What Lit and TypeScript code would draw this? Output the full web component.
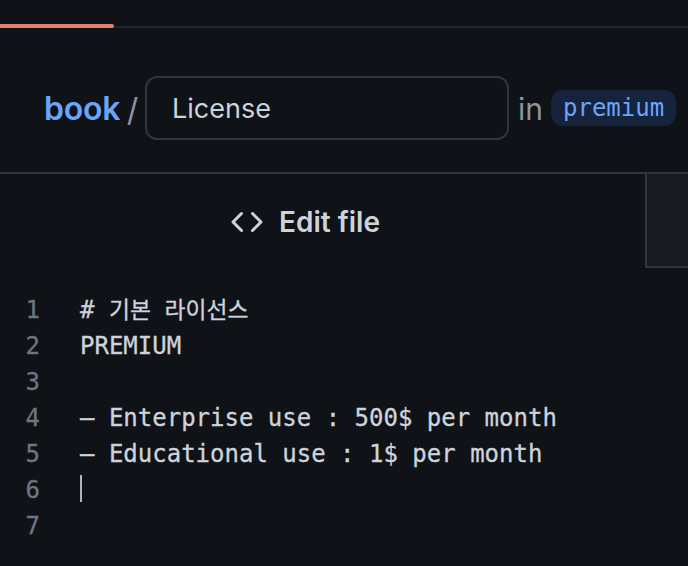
import { LitElement, html, css } from "lit";
import { customElement } from "lit/decorators.js";

const LINES = ["", "PREMIUM", "", "– Enterprise use : 500$ per month", "– Educational use : 1$ per month", "", ""];

@customElement("app-root")
export class AppRoot extends LitElement {
  static styles = css`
    :host { display: block; width: 688px; height: 566px; overflow: hidden; background: #0f1217; color: #cdd3db; font-family: Inter, "Noto Sans", sans-serif; }
    .progress { height: 24px; }
    .track { height: 2px; margin-top: 2px; background: #21262d; position: relative; }
    .fill { position: absolute; left: 0; top: -2px; width: 114px; height: 4px; background: #e5806a; border-radius: 0 2px 2px 0; }
    .header { height: 128px; padding: 16px 0 0 44px; display: flex; align-items: center; border-bottom: 2px solid #30363d; }
    .book { color: #6aa5f8; font-size: 32px; font-weight: 600; letter-spacing: -0.2px; width: 76px; flex: none; }
    .slash { color: #8b949e; font-size: 32px; width: 25px; text-align: center; flex: none; position: relative; top: 1px; }
    .input { width: 364px; height: 64px; box-sizing: border-box; border: 2px solid #30363d; border-radius: 12px; padding-left: 25px; display: flex; align-items: center; font-size: 27px; color: #cdd3db; flex: none; }
    .in { color: #8b949e; font-size: 30px; margin-left: 9px; width: 33px; flex: none; position: relative; top: 1px; }
    .badge { background: #15233c; color: #6aa5f8; font-family: "DejaVu Sans Mono", monospace; font-size: 24px; height: 36px; line-height: 36px; padding: 0 12px; border-radius: 12px; white-space: nowrap; flex: none; }
    .tabs { height: 94px; display: flex; position: relative; }
    .tab { display: flex; align-items: center; gap: 16px; margin-left: 231px; font-size: 28px; font-weight: 600; color: #cdd3db; height: 95px; }
    .tab svg { display: block; }
    .side { position: absolute; left: 645px; top: 0; width: 60px; height: 94px; box-sizing: border-box; background: #181b22; border-left: 2px solid #30363d; border-bottom: 2px solid #30363d; }
    .code { padding-top: 24px; font-family: "DejaVu Sans Mono", "Noto Sans CJK KR", monospace; font-size: 24px; line-height: 36px; -webkit-text-stroke: 0.3px currentColor; }
    .row { display: flex; height: 36px; }
    .num { width: 40px; text-align: right; color: #6e7681; flex: none; }
    .txt { margin-left: 40px; white-space: pre; color: #cdd3db; position: relative; }
    .ko { font-size: 22.8px; }
    .caret { position: absolute; left: 0; top: 3px; width: 2px; height: 27px; background: #aeb4bc; }
  `;

  render() {
    return html`
      <div class="progress"></div>
      <div class="track"><div class="fill"></div></div>
      <div class="header">
        <span class="book">book</span><span class="slash">/</span>
        <div class="input">License</div>
        <span class="in">in</span>
        <span class="badge">premium</span>
      </div>
      <div class="tabs">
        <div class="tab">
          <svg width="32" height="32" viewBox="0 0 16 16" fill="#cdd3db"><path d="m11.28 3.22 4.25 4.25a.75.75 0 0 1 0 1.06l-4.25 4.25a.749.749 0 0 1-1.275-.326.749.749 0 0 1 .215-.734L13.94 8l-3.72-3.72a.749.749 0 0 1 .326-1.275.749.749 0 0 1 .734.215Zm-6.56 0a.751.751 0 0 1 1.042.018.751.751 0 0 1 .018 1.042L2.06 8l3.72 3.72a.749.749 0 0 1-.326 1.275.749.749 0 0 1-.734-.215L.47 8.53a.75.75 0 0 1 0-1.06Z"/></svg>
          <span>Edit file</span>
        </div>
        <div class="side"></div>
      </div>
      <div class="code">
        ${LINES.map((l, i) => html`<div class="row"><span class="num">${i + 1}</span><span class="txt">${i === 0 ? html`# <span class="ko">기본 라이선스</span>` : l}${i === 5 ? html`<span class="caret"></span>` : ""}</span></div>`)}
      </div>
    `;
  }
}
